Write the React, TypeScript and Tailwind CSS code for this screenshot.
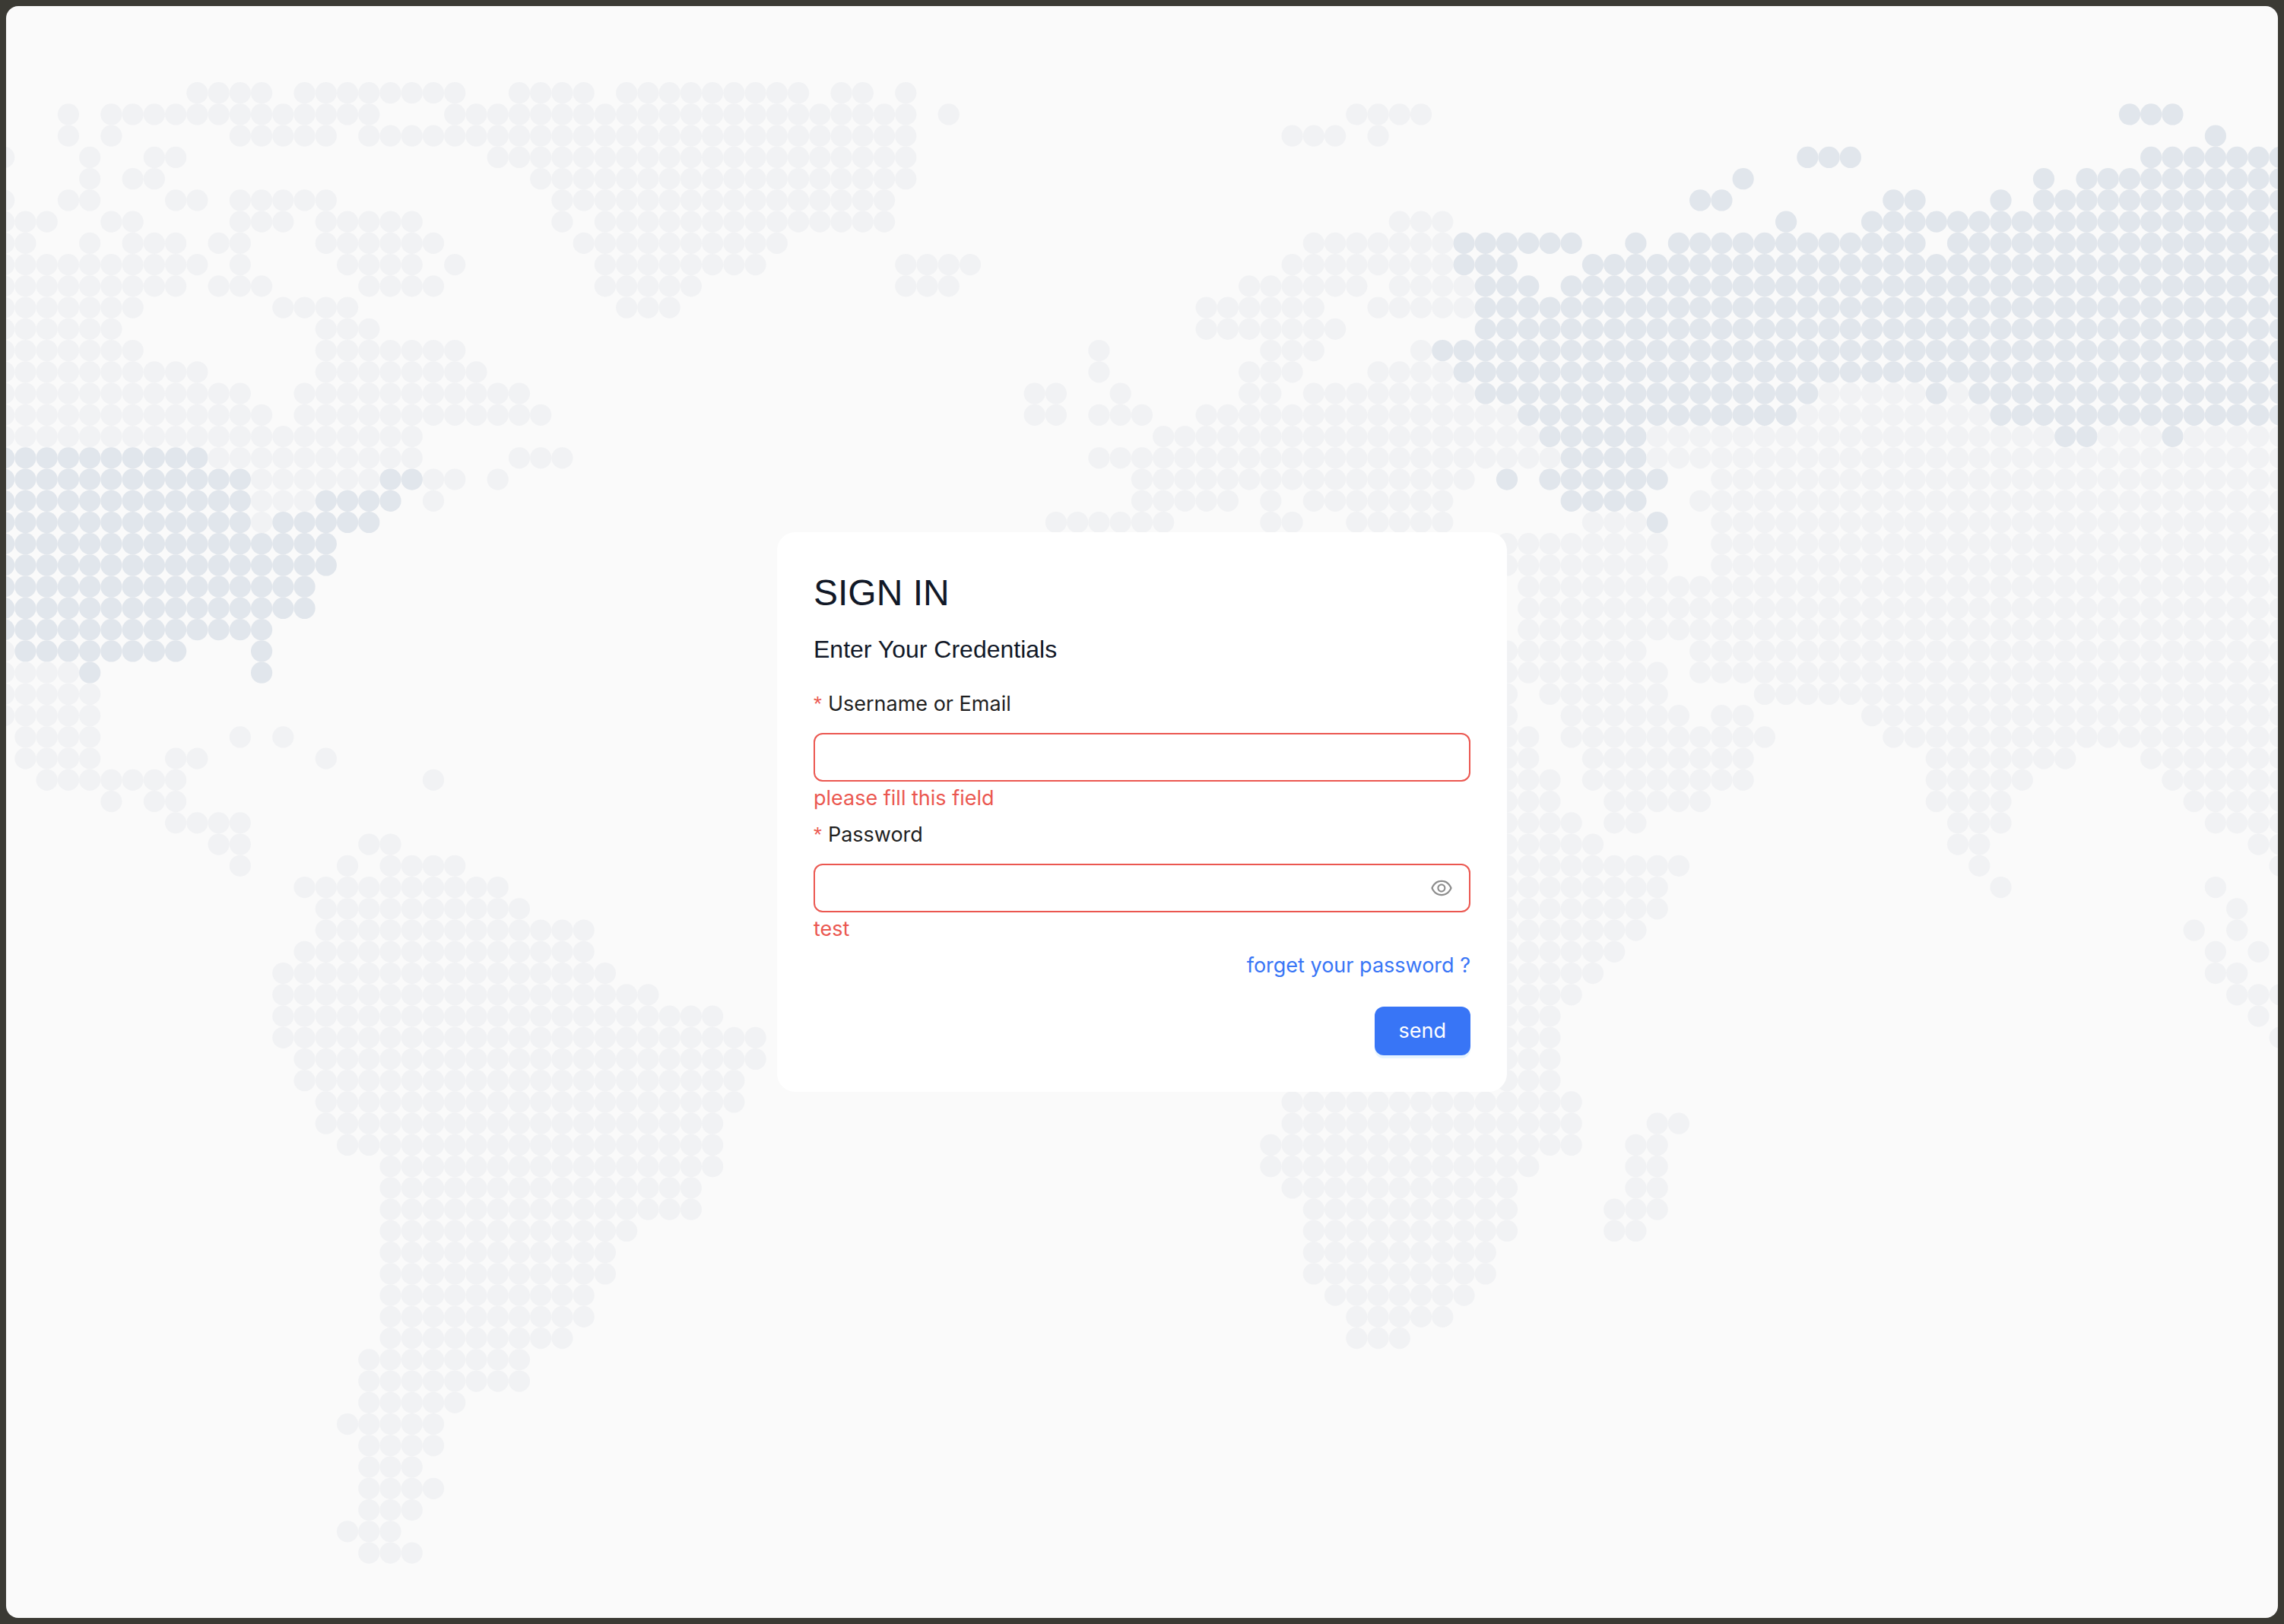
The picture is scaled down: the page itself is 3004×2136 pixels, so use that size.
const PITCH = 28.24;
const RADIUS = 14.12;

// One entry per latitude row: inclusive column runs, "*" marks a highlighted country.
const MAP_ROWS = [
  "9-12 14-21 24-27 29-37 39-40 42",
  "3 5-17 21-42 44 63-66 *99-101",
  "3 5 11-15 17-42 60-62 64 *103",
  "0 4 7-8 23-42 *84-86 *100-106",
  "4 6-7 25-42 *81 *95 *97-106",
  "0 3-4 8-9 11-15 26-41 *79-80 *88-89 *93 *95-106",
  "0-2 5-6 11-13 15-19 26 28-41 65-67 *83 *87-106",
  "0-1 4 6-8 10-11 15-20 27-36 61-67 *68-73 *76 *78-89 *91-106",
  "0-9 11 16-19 21 28-35 42-45 60-67 *68-70 *74-106",
  "0-8 10-12 17-20 28-32 42-44 58-63 65-68 *69-71 *73-106",
  "0-6 13-16 29-31 56-61 64-68 *69-106",
  "0-5 15-17 56-62 *69-106",
  "0-6 15-21 51 59-61 66 *67-106",
  "0-9 15-22 51 58-60 64-67 *68-106",
  "0-11 14-24 48-49 52 58-59 61-68 *69-84 85-89 *90 91 *92-106",
  "0-12 14-25 48-49 51-53 56-70 *71-83 84-92 *93-106",
  "0-19 54-71 *72-76 77-95 *96-97 98-100 *101 102-106",
  "*0-9 10-19 24-26 51-72 *73-76 77-106",
  "*0-11 12-17 *18-19 20-21 23 53-68 *70 *72-77 80-106",
  "*0-11 12-14 *15-18 20 53-57 59 61-67 *73-76 79-106",
  "*0-11 12 *13-17 49-54 59-60 63-67 74-76 *77 80-106",
  "*0-15 70-77 80-106",
  "*0-15 70-77 80-106",
  "*0-14 71-106",
  "*0-14 71-106",
  "*0-12 71-106",
  "0 *1-8 *12 70-76 79-106",
  "0-3 *4 *12 70-77 79-106",
  "0-4 70 72-77 82-106",
  "0-4 70 73-78 80-81 87-106",
  "1-4 11 13 70-71 73-82 88-106",
  "1-4 8-9 15 70-71 74-81 90-96 100-106",
  "2-8 20 70-72 74-81 90-94 101-106",
  "5 7-8 70-72 75-79 90-93 102-106",
  "8-11 70-73 75-76 91-93 103-106",
  "10-11 17-18 70-74 91-92 105-106",
  "11 16 18-21 70-78 92 106",
  "14-23 70-77 93 103",
  "15-24 70-77 104",
  "15-27 70-76 102 104",
  "14-27 70-75 103 105",
  "13-28 70-74 103-104",
  "13-30 70-73 104-106",
  "13-33 70-72 105",
  "13-35 70-72 106",
  "14-35 70-72",
  "14-34 70-72",
  "15-34 60-73",
  "15-33 60-73 77-78",
  "16-33 59-73 76-77",
  "18-33 59-71 76-77",
  "18-32 60-70 76-77",
  "18-32 61-70 75-77",
  "18-29 61-70 75-76",
  "18-28 61-69",
  "18-28 61-69",
  "18-27 62-68",
  "18-27 63-67",
  "18-26 63-65",
  "17-24",
  "17-24",
  "17-21",
  "16-20",
  "17-20",
  "17-19",
  "17-20",
  "17-19",
  "16-18",
  "17-19",
];

type Dot = { col: number; row: number; active: boolean };

const DOTS: Dot[] = MAP_ROWS.flatMap((line, row) =>
  line.split(" ").flatMap((run) => {
    const active = run.startsWith("*");
    const [start, end] = run.replace("*", "").split("-").map(Number);
    const last = end ?? start;
    return Array.from({ length: last - start + 1 }, (_, i) => ({ col: start + i, row, active }));
  }),
);

function WorldMap() {
  return (
    <svg
      aria-hidden="true"
      viewBox="0 0 2988 2120"
      preserveAspectRatio="xMidYMid slice"
      className="absolute inset-0 h-full w-full"
    >
      {DOTS.map(({ col, row, active }) => (
        <circle
          key={`${col}-${row}`}
          cx={-2.8 + col * PITCH}
          cy={114.2 + row * PITCH}
          r={RADIUS}
          className={active ? "fill-[#e1e6ec]" : "fill-[#f1f2f4]"}
        />
      ))}
    </svg>
  );
}

function EyeIcon() {
  return (
    <svg viewBox="64 64 896 896" className="h-7 w-7" fill="currentColor" aria-hidden="true">
      <path d="M942.2 486.2C847.4 286.5 704.1 186 512 186c-192.2 0-335.4 100.5-430.2 300.3a60.3 60.3 0 000 51.5C176.6 737.5 319.9 838 512 838c192.2 0 335.4-100.5 430.2-300.3 7.7-16.2 7.7-35 0-51.5zM512 766c-161.3 0-279.4-81.8-362.7-254C232.6 339.8 350.7 258 512 258c161.3 0 279.4 81.8 362.7 254C791.5 684.2 673.4 766 512 766zm-4-430c-97.2 0-176 78.8-176 176s78.8 176 176 176 176-78.8 176-176-78.8-176-176-176zm0 288c-61.9 0-112-50.1-112-112s50.1-112 112-112 112 50.1 112 112-50.1 112-112 112z" />
    </svg>
  );
}

function FieldLabel({ htmlFor, children }: { htmlFor: string; children: string }) {
  return (
    <label htmlFor={htmlFor} className="flex gap-2 pb-4 text-[#1f1f1f]">
      <span aria-hidden="true" className="font-['Liberation_Sans',sans-serif] text-[28px] leading-[44px] text-[#eb5750]">
        *
      </span>
      {children}
    </label>
  );
}

export default function App() {
  return (
    <div className="flex min-h-screen bg-[#3b3a34] p-2 font-['Inter','Liberation_Sans',sans-serif]">
      <main className="relative flex flex-1 items-center justify-center overflow-hidden rounded-2xl bg-[#fafafa]">
        <WorldMap />
        <form
          noValidate
          className="relative flex w-full max-w-[960px] flex-col rounded-3xl bg-white p-12 text-[27px] leading-[44px]"
        >
          <h1 className="mb-4 font-['Liberation_Sans',sans-serif] text-5xl leading-[64px] text-[#111827]">SIGN IN</h1>
          <p className="mb-6 font-['Liberation_Sans',sans-serif] text-[32px] leading-[52px] text-[#111827]">
            Enter Your Credentials
          </p>

          <FieldLabel htmlFor="username">Username or Email</FieldLabel>
          <input
            id="username"
            type="text"
            aria-invalid="true"
            aria-describedby="username-error"
            className="h-16 w-full rounded-xl border-2 border-[#eb5750] bg-white px-[22px] outline-none"
          />
          <p id="username-error" className="pb-1 text-[#eb5750]">
            please fill this field
          </p>

          <FieldLabel htmlFor="password">Password</FieldLabel>
          <div className="flex h-16 items-center rounded-xl border-2 border-[#eb5750] bg-white px-[22px]">
            <input
              id="password"
              type="password"
              aria-invalid="true"
              aria-describedby="password-error"
              className="min-w-0 flex-1 outline-none"
            />
            <button type="button" aria-label="Show password" className="text-[#8c8c8c]">
              <EyeIcon />
            </button>
          </div>
          <p id="password-error" className="pb-1 text-[#eb5750]">
            test
          </p>

          <a href="#forgot" className="mb-8 self-end text-[#3875f6]">
            forget your password ?
          </a>
          <button
            type="submit"
            className="h-16 self-end rounded-xl bg-[#3875f6] px-8 text-white shadow-[0_4px_0_rgba(5,145,255,0.1)]"
          >
            send
          </button>
        </form>
      </main>
    </div>
  );
}
